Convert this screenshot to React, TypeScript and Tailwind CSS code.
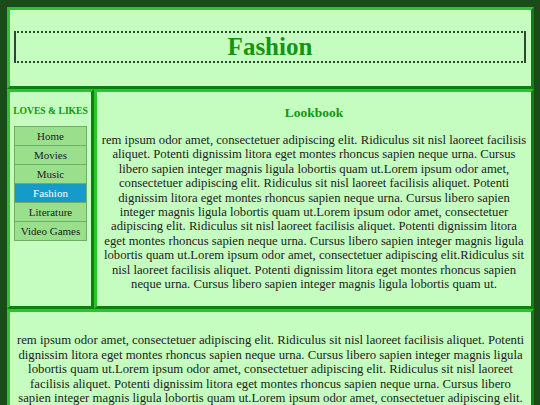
import React from "react";

const S = "Lorem ipsum odor amet, consectetuer adipiscing elit. Ridiculus sit nisl laoreet facilisis aliquet. Potenti dignissim litora eget montes rhoncus sapien neque urna. Cursus libero sapien integer magnis ligula lobortis quam ut.";
const S2 = "Lorem ipsum odor amet, consectetuer adipiscing elit.Ridiculus sit nisl laoreet facilisis aliquet. Potenti dignissim litora eget montes rhoncus sapien neque urna. Cursus libero sapien integer magnis ligula lobortis quam ut.";

const P1 = (S + S + S + S2).slice(2);
const P2 = (S + S + S + S + S).slice(2);

const nav = ["Home", "Movies", "Music", "Fashion", "Literature", "Video Games"];

const box =
  "border-[3px] border-t-[#2cc42c] border-l-[#2cc42c] border-b-[#0e800e] border-r-[#0e800e] bg-[#c5fcbf]";

export default function App() {
  return (
    <div className="min-h-[405px] bg-[#1b4a1b] pl-[7px] pr-[6px] pt-[7px] font-['Liberation_Serif',serif] text-[#222]">
      <header className={`${box} pl-[4px] pr-[5px] pt-[21px] pb-[23px]`}>
        <div className="border-2 border-dotted border-[#2b4a2b] [border-left-style:solid] [border-right-style:solid]">
          <h1 className="text-center text-[25px] leading-[28px] font-bold text-[#129612]">
            Fashion
          </h1>
        </div>
      </header>
      <div className="flex">
        <aside className={`${box} w-[87px] shrink-0 pt-[13px]`}>
          <h2 className="text-center text-[9.6px] leading-[11px] font-bold text-[#129612]">
            LOVES &amp; LIKES
          </h2>
          <ul className="mx-[4px] mt-[10px] border-t border-x border-[#6cae66]">
            {nav.map((n) => (
              <li
                key={n}
                className={`h-[19px] border-b border-[#6cae66] text-center text-[11px] leading-[18px] ${
                  n === "Fashion" ? "bg-[#149bc9] text-white" : "bg-[#9adf8c] text-[#222]"
                }`}
              >
                {n}
              </li>
            ))}
          </ul>
        </aside>
        <main className={`${box} flex-1 px-[4px] pt-[13px] pb-[15px]`}>
          <h3 className="text-center text-[13.5px] leading-[15px] font-bold text-[#129612]">
            Lookbook
          </h3>
          <p className="mt-[13px] text-center text-[12.7px] leading-[14.4px]">{P1}</p>
        </main>
      </div>
      <footer className={`${box} px-[4px] pt-[21px] pb-[21px]`}>
        <p className="text-center text-[12.75px] leading-[14.4px]">{P2}</p>
      </footer>
    </div>
  );
}
